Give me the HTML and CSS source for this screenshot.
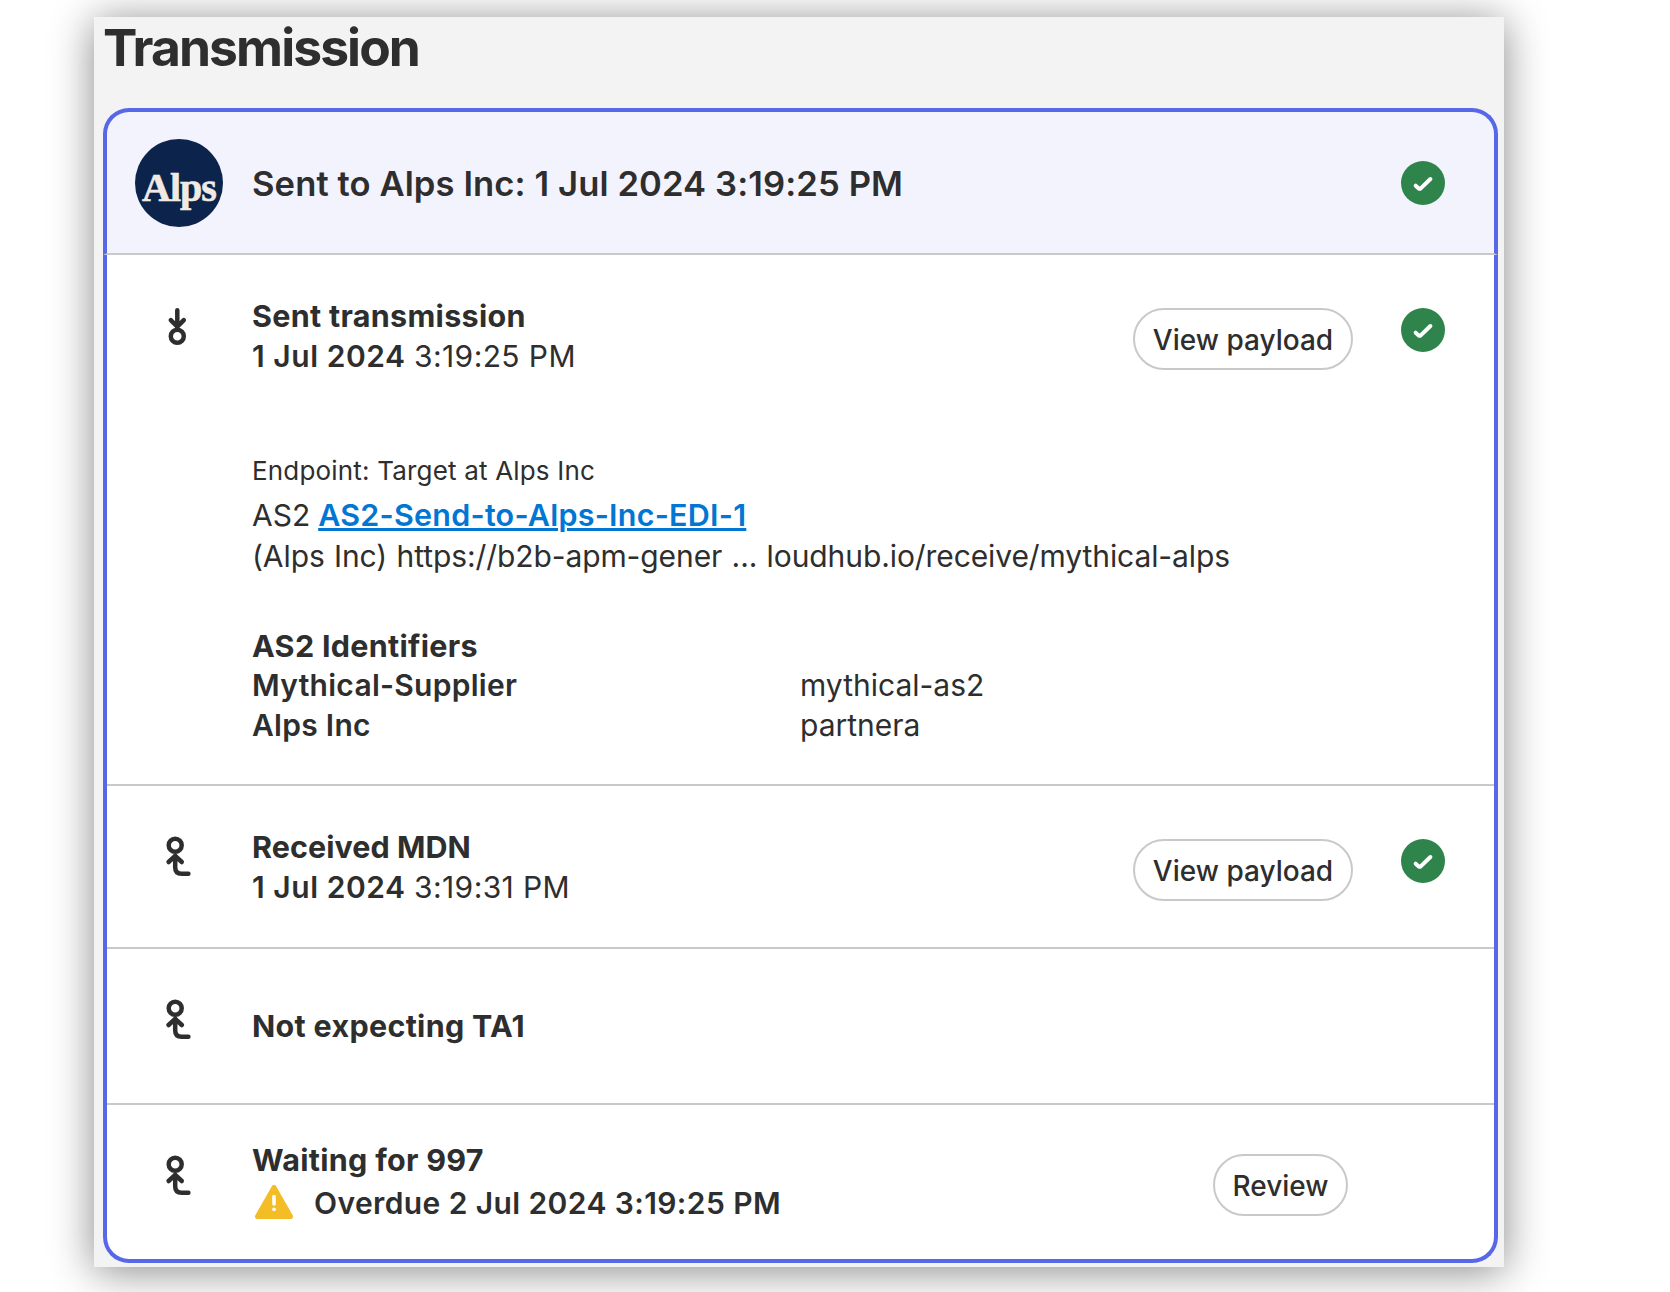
FILE: index.html
```html
<!DOCTYPE html>
<html lang="en">
<head>
<meta charset="utf-8">
<title>Transmission</title>
<link rel="stylesheet" href="styles.css">
</head>
<body>
<svg class="defs" width="0" height="0" aria-hidden="true">
  <symbol id="check" viewBox="0 0 44 44"><circle cx="22" cy="22" r="22" fill="#2e844a"/><path d="M14.700 24.700l3 2.700q1 .8 2 0l9.700-9.400" fill="none" stroke="#fff" stroke-width="4" stroke-linecap="round" stroke-linejoin="round"/></symbol>
  <symbol id="received" viewBox="0 0 60 60"><g fill="none" stroke="#2e2e2e" stroke-width="4.5" stroke-linecap="round" stroke-linejoin="round"><circle cx="25.200" cy="19.300" r="6.500"/><path d="M18.600 36l6.600-6.200 6.600 6.200M25.200 29.800V41.500q0 6.300 6.500 6.300H38.400"/></g></symbol>
</svg>
<main class="panel">
  <h1 class="title">Transmission</h1>
  <section class="card">
    <header class="head">
      <div class="logo"><span>Alps</span></div>
      <h2 class="head-text">Sent to Alps Inc: 1 Jul 2024 3:19:25 PM</h2>
      <svg class="check"><use href="#check"/></svg>
    </header>
    <div class="body">
      <div class="row row-sent">
        <svg class="step" viewBox="0 0 60 60"><g fill="none" stroke="#2e2e2e" stroke-width="4.5" stroke-linecap="round" stroke-linejoin="round"><circle cx="27.300" cy="41.300" r="6.500"/><path d="M27.300 15.200V33M20.800 25.200l6.500 6.500 6.500-6.500"/></g></svg>
        <div class="main">
          <div class="line bold">Sent transmission</div>
          <div class="line"><b class="date">1 Jul 2024</b> <span class="time">3:19:25 PM</span></div>
          <div class="endpoint">Endpoint: Target at Alps Inc</div>
          <div class="line channel">AS2 <a class="link" href="#">AS2-Send-to-Alps-Inc-EDI-1</a></div>
          <div class="line url">(Alps Inc) https://b2b-apm-gener ... loudhub.io/receive/mythical-alps</div>
          <div class="bold ids-title">AS2 Identifiers</div>
          <div class="ids">
            <div class="party">Mythical-Supplier</div><div>mythical-as2</div>
            <div class="party">Alps Inc</div><div>partnera</div>
          </div>
        </div>
        <button class="btn">View payload</button>
        <svg class="check"><use href="#check"/></svg>
      </div>
      <div class="row row-mdn">
        <svg class="step"><use href="#received"/></svg>
        <div class="main">
          <div class="line bold mdn">Received MDN</div>
          <div class="line"><b class="date">1 Jul 2024</b> <span class="time">3:19:31 PM</span></div>
        </div>
        <button class="btn">View payload</button>
        <svg class="check"><use href="#check"/></svg>
      </div>
      <div class="row row-ta1">
        <svg class="step"><use href="#received"/></svg>
        <div class="main">
          <div class="line bold">Not expecting TA1</div>
        </div>
      </div>
      <div class="row row-997">
        <svg class="step"><use href="#received"/></svg>
        <div class="main">
          <div class="line bold">Waiting for 997</div>
          <div class="line overdue">
            <svg class="warn" viewBox="0 0 38 34"><path d="M19 2.500L35.500 31.500H2.500z" fill="#f4bc25" stroke="#f4bc25" stroke-width="5" stroke-linejoin="round"/><path d="M19 11.500v7.500" stroke="#fff" stroke-width="3.600" stroke-linecap="round"/><circle cx="19" cy="24.300" r="1.900" fill="#fff"/></svg>
            <span>Overdue 2 Jul 2024 3:19:25 PM</span>
          </div>
        </div>
        <button class="btn btn-review">Review</button>
      </div>
    </div>
  </section>
</main>
</body>
</html>
```
FILE: styles.css
```css
* { box-sizing: border-box; }
body {
  margin: 0;
  padding: 17px 0 25px 94px;
  height: 1292px;
  overflow: hidden;
  background: #fff;
  color: #2e2e2e;
  font: 400 30px/40px Inter, "Liberation Sans", sans-serif;
}
.defs { position: absolute; }
.panel {
  width: 1410px;
  height: 1250px;
  padding: 0 6px 4px 9px;
  background: #f3f3f3;
  box-shadow: 0 4px 40px rgba(0, 0, 0, .47);
}
.title {
  margin: 0;
  height: 91px;
  font-size: 51.5px;
  line-height: 60px;
  font-weight: 700;
  letter-spacing: -1.9px;
}
.head {
  display: flex;
  align-items: center;
  height: 147px;
  padding: 0 49px 0 28px;
  border: 4px solid #5867e8;
  border-bottom: 2px solid #c9c9c9;
  border-radius: 26px 26px 0 0;
  background: #f3f3fe;
}
.logo {
  display: flex;
  justify-content: center;
  width: 88px;
  height: 88px;
  border-radius: 50%;
  background: #0c234b;
  color: #f0e9e4;
  font: 700 40px/98px "Liberation Serif", serif;
  letter-spacing: -1px;
  -webkit-text-stroke: .6px #f0e9e4;
}
.head-text {
  flex: 1;
  margin: 0 0 0 29px;
  font-size: 34.6px;
  font-weight: 600;
  letter-spacing: .1px;
}
.check { width: 44px; height: 44px; flex: none; }
.body {
  border: 4px solid #5867e8;
  border-top: 0;
  border-radius: 0 0 26px 26px;
  background: #fff;
}
.row { display: flex; align-items: flex-start; padding-right: 49px; }
.row + .row { border-top: 2px solid #c9c9c9; }
.row-sent { height: 529px; }
.row-mdn { height: 163px; }
.row-ta1 { height: 156px; }
.row-997 { height: 156px; }
.step { flex: none; width: 60px; height: 60px; margin: 40px 42px 0 43px; }
.main { flex: 1; min-width: 0; padding-top: 41px; white-space: nowrap; }
.row-ta1 .main { padding-top: 57px; }
.row-997 .main { padding-top: 35px; }
.bold { font-size: 30.5px; font-weight: 700; letter-spacing: .3px; }
.mdn { letter-spacing: .05px; }
.date { font-weight: 600; letter-spacing: .55px; }
.time { letter-spacing: .4px; }
.row .check { margin-top: 53px; }
.endpoint { margin-top: 75px; font-size: 26px; letter-spacing: .18px; }
.channel { margin-top: 4px; }
.link {
  margin-left: -.5px;
  color: #0176d3;
  font-size: 30.5px;
  font-weight: 600;
  letter-spacing: .23px;
  text-decoration-thickness: 3px;
}
.url { margin-top: 1px; letter-spacing: -.09px; word-spacing: 1px; }
.ids-title { margin-top: 50px; }
.ids { display: grid; grid-template-columns: 548px auto; margin-top: -1px; }
.party { font-weight: 600; letter-spacing: .28px; }
.btn {
  height: 62px;
  width: 220px;
  margin: 53px 48px 0 0;
  padding: 2px 0 0;
  border: 2px solid #c9c9c9;
  border-radius: 31px;
  background: #fff;
  color: #2e2e2e;
  font: 500 28px/40px Inter, "Liberation Sans", sans-serif;
  white-space: nowrap;
}
.btn-review { width: 135px; margin: 49px 97px 0 0; }
.overdue { display: flex; margin-top: 3px; font-weight: 600; letter-spacing: .4px; }
.warn { width: 38px; height: 34px; margin: 2px 21px 0 3px; }
```
